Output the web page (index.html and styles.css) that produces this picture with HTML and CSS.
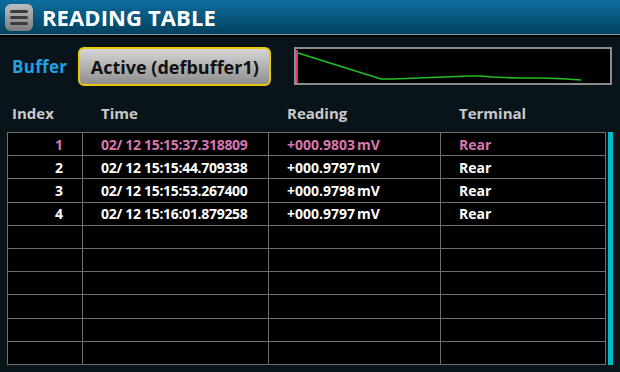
FILE: index.html
```html
<!DOCTYPE html>
<html>

<head>
    <meta charset="UTF-8">
    <title>Reading Table</title>
    <link rel="stylesheet" href="styles.css">
</head>

<body>
    <div class="titlebar">
        <div class="menu"><span></span><span></span><span></span></div>
        <div class="title">READING TABLE</div>
    </div>

    <div class="toolbar">
        <div class="buflabel">Buffer</div>
        <button class="bufbtn">Active (defbuffer1)</button>
        <svg class="graph" width="318" height="38" viewBox="0 0 318 38">
            <rect x="1" y="1" width="316" height="36" fill="#000" stroke="#8c8c8c" stroke-width="2"/>
            <line x1="3" y1="3" x2="3" y2="36" stroke="#e0338c" stroke-width="2"/>
            <polyline fill="none" stroke="#22c022" stroke-width="1.6"
                points="4,6 87,32 99,32 124,31 149,30 175,29 187,29 198,30 223,31 248,31 273,32 287,33"/>
        </svg>
    </div>

    <div class="heads">
        <div class="h-index">Index</div>
        <div>Time</div>
        <div>Reading</div>
        <div>Terminal</div>
    </div>

    <div class="tablewrap">
        <div class="grid">
            <div class="row cur"><div class="c-index">1</div><div class="c-time">02/ 12 15:15:37.318809</div><div class="c-read">+000.9803<span class="u">mV</span></div><div>Rear</div></div>
            <div class="row"><div class="c-index">2</div><div class="c-time">02/ 12 15:15:44.709338</div><div class="c-read">+000.9797<span class="u">mV</span></div><div>Rear</div></div>
            <div class="row"><div class="c-index">3</div><div class="c-time">02/ 12 15:15:53.267400</div><div class="c-read">+000.9798<span class="u">mV</span></div><div>Rear</div></div>
            <div class="row"><div class="c-index">4</div><div class="c-time">02/ 12 15:16:01.879258</div><div class="c-read">+000.9797<span class="u">mV</span></div><div>Rear</div></div>
            <div class="row"><div></div><div></div><div></div><div></div></div>
            <div class="row"><div></div><div></div><div></div><div></div></div>
            <div class="row"><div></div><div></div><div></div><div></div></div>
            <div class="row"><div></div><div></div><div></div><div></div></div>
            <div class="row"><div></div><div></div><div></div><div></div></div>
            <div class="row"><div></div><div></div><div></div><div></div></div>
        </div>
        <div class="scroll"></div>
    </div>
</body>

</html>
```

FILE: styles.css
```css
* {box-sizing: border-box;}

body {
    margin: 0;
    width: 620px;
    height: 372px;
    overflow: hidden;
    background: #08141a;
    font-family: "Open Sans", "DejaVu Sans", sans-serif;
    font-weight: bold;
}

/* 상단 타이틀바 */
.titlebar {
    height: 37px;
    display: flex;
    align-items: center;
    padding: 0 0 3px 5px;
    background: linear-gradient(#0d6d9e, #03415f 92%, #7e98a6 92%, #7e98a6 95%, #000 95%);
}
.menu {
    width: 28px;
    height: 27px;
    border-radius: 6px;
    background: linear-gradient(#bdbdbd, #7d7d7d);
    display: flex;
    flex-direction: column;
    justify-content: center;
    gap: 3px;
    padding: 0 5px;
}
.menu span {
    height: 3px;
    border-radius: 2px;
    background: #3c3c3c;
}
.title {
    color: #fff;
    font-size: 22px;
    margin-left: 9px;
    letter-spacing: 0.1px;
}

/* 버퍼 선택줄 */
.toolbar {
    display: flex;
    align-items: center;
    height: 42px;
    margin-top: 8px;
    padding-left: 12px;
}
.buflabel {
    color: #1ea2e4;
    font-size: 17px;
    letter-spacing: 0.3px;
}
.bufbtn {
    margin-left: 11px;
    width: 193px;
    height: 39px;
    border: 2px solid #e8c800;
    border-radius: 6px;
    background: linear-gradient(#d6d6d6, #8e8e8e);
    color: #111;
    font-family: inherit;
    font-weight: bold;
    font-size: 18px;
    padding: 0;
    margin-top: 1px;
}
.graph {
    margin-left: 23px;
    margin-top: -1px;
    display: block;
}

/* 컬럼 제목 */
.heads {
    display: grid;
    grid-template-columns: 75px 186px 172px 165px;
    margin-left: 8px;
    height: 45px;
    padding-top: 16px;
    color: #cacaca;
    font-size: 15px;
}
.heads div {padding-left: 18px;}
.heads .h-index {padding-left: 4px;}

/* 테이블 */
.tablewrap {
    display: flex;
    margin-left: 7px;
}
.grid {
    width: 599px;
    height: 233px;
    background: #000;
    border: 1px solid #6e6e6e;
    border-bottom: none;
    display: grid;
    grid-template-rows: repeat(10, 1fr);
}
.row {
    display: grid;
    grid-template-columns: 75px 186px 172px 165px;
    border-bottom: 1px solid #6e6e6e;
    color: #fff;
    font-size: 14px;
}
.row div {
    border-right: 1px solid #6e6e6e;
    padding-left: 18px;
    display: flex;
    align-items: center;
    white-space: pre;
}
.row div:last-child {border-right: none;}
.row .c-index {
    justify-content: flex-end;
    padding: 0 19px 0 0;
}
.row .c-time {letter-spacing: -0.3px;}
.row .u {margin-left: 2px;}
.row.cur {color: #d878b0;}

.scroll {
    width: 5px;
    height: 233px;
    margin-left: 2px;
    background: #00bcc4;
}
```
